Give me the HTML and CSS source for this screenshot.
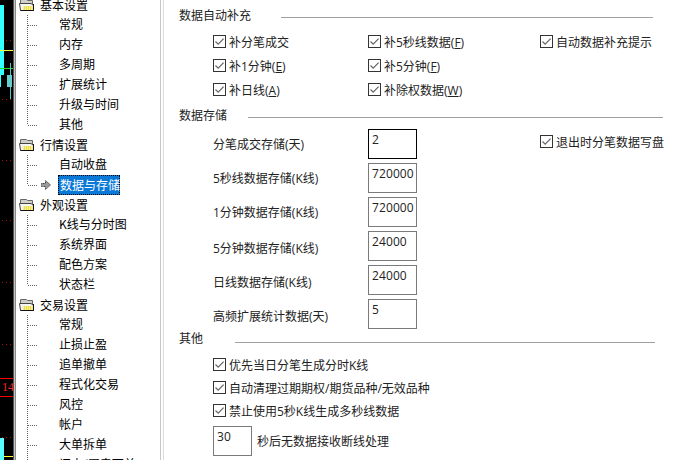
FILE: index.html
```html
<!DOCTYPE html>
<html lang="zh-CN">
<head>
<meta charset="utf-8">
<title>系统设置</title>
<link rel="stylesheet" href="styles.css">
</head>
<body>
<svg class="defs" width="0" height="0" aria-hidden="true">
  <symbol id="check" viewBox="0 0 13 13">
    <rect x="0.5" y="0.5" width="12" height="12" fill="#fff" stroke="#333"/>
    <path d="M2.5 6.5 5.2 9.2 10.6 3.6" fill="none" stroke="#666" stroke-width="1.2"/>
  </symbol>
  <symbol id="folder" viewBox="0 0 15 13">
    <path d="M1.5 1.5H7.5L8.5 2.5H13.5V11.5H1.5Z" fill="#cfcfc8" stroke="#666"/>
    <path d="M0.5 5.5H12L14.5 7.5V12.5H1.5Z" fill="#f4f4f0" stroke="#444"/>
    <path d="M4 8H13.5V12H4Z" fill="#f0dc3c"/>
    <path d="M4 9H13.5M4 11H13.5" stroke="#fff" stroke-dasharray="1 1"/>
    <path d="M1.5 12.5H14.5V6" fill="none" stroke="#111"/>
  </symbol>
</svg>
<div class="app">
  <div class="chart">
    <i class="c-bar"></i><i class="c-bar2"></i><i class="c-yellow"></i><i class="c-green"></i>
    <i class="c-wick"></i><i class="c-body"></i>
    <i class="c-dots d1"></i><i class="c-dots d2"></i><i class="c-dots d3"></i><i class="c-dots d4"></i><i class="c-dots d5"></i><i class="c-dots d6"></i><i class="c-dots d7"></i>
    <span class="c-tag">14</span>
    <i class="c-bottom"></i><i class="c-yellow2"></i>
  </div>
  <div class="chart-edge"></div>
  <nav class="tree">
    <div class="parent"><svg class="folder"><use href="#folder"/></svg>基本设置</div>
    <ul class="group">
      <li>常规</li><li>内存</li><li>多周期</li><li>扩展统计</li><li>升级与时间</li><li>其他</li>
    </ul>
    <div class="parent"><svg class="folder"><use href="#folder"/></svg>行情设置</div>
    <ul class="group">
      <li>自动收盘</li>
      <li class="current">
        <svg class="pointer" viewBox="0 0 10 10"><path d="M0.5 3.5H4.5V0.5L9.5 5 4.5 9.5V6.5H0.5Z" fill="#9a9a9a" stroke="#444" stroke-dasharray="1 0.5"/></svg>
        <span class="selected">数据与存储</span>
      </li>
    </ul>
    <div class="parent"><svg class="folder"><use href="#folder"/></svg>外观设置</div>
    <ul class="group">
      <li>K线与分时图</li><li>系统界面</li><li>配色方案</li><li>状态栏</li>
    </ul>
    <div class="parent"><svg class="folder"><use href="#folder"/></svg>交易设置</div>
    <ul class="group">
      <li>常规</li><li>止损止盈</li><li>追单撤单</li><li>程式化交易</li><li>风控</li><li>帐户</li><li>大单拆单</li><li>闪电/买卖下单</li>
    </ul>
  </nav>
  <div class="tree-edge"></div>
  <main class="pane">
    <section class="sec-fill">
      <h2 class="head"><span>数据自动补充</span><i class="rule rule-fill"></i></h2>
      <div class="checks">
        <label class="chk"><svg class="box"><use href="#check"/></svg>补分笔成交</label>
        <label class="chk"><svg class="box"><use href="#check"/></svg><span>补5秒线数据(<u>F</u>)</span></label>
        <label class="chk"><svg class="box"><use href="#check"/></svg>自动数据补充提示</label>
        <label class="chk"><svg class="box"><use href="#check"/></svg><span>补1分钟(<u>E</u>)</span></label>
        <label class="chk"><svg class="box"><use href="#check"/></svg><span>补5分钟(<u>F</u>)</span></label>
        <span></span>
        <label class="chk"><svg class="box"><use href="#check"/></svg><span>补日线(<u>A</u>)</span></label>
        <label class="chk"><svg class="box"><use href="#check"/></svg><span>补除权数据(<u>W</u>)</span></label>
      </div>
    </section>
    <section class="sec-store">
      <h2 class="head"><span>数据存储</span><i class="rule rule-store"></i></h2>
      <div class="form">
        <div class="lbl">分笔成交存储(天)</div><div class="field focus">2</div>
        <label class="chk exit"><svg class="box"><use href="#check"/></svg>退出时分笔数据写盘</label>
        <div class="lbl">5秒线数据存储(K线)</div><div class="field">720000</div><span></span>
        <div class="lbl">1分钟数据存储(K线)</div><div class="field">720000</div><span></span>
        <div class="lbl low">5分钟数据存储(K线)</div><div class="field">24000</div><span></span>
        <div class="lbl low">日线数据存储(K线)</div><div class="field">24000</div><span></span>
        <div class="lbl low">高频扩展统计数据(天)</div><div class="field">5</div><span></span>
      </div>
    </section>
    <section class="sec-other">
      <h2 class="head"><span>其他</span><i class="rule rule-other"></i></h2>
      <div class="stack">
        <label class="chk"><svg class="box"><use href="#check"/></svg>优先当日分笔生成分时K线</label>
        <label class="chk"><svg class="box"><use href="#check"/></svg>自动清理过期期权/期货品种/无效品种</label>
        <label class="chk"><svg class="box"><use href="#check"/></svg>禁止使用5秒K线生成多秒线数据</label>
      </div>
      <div class="timeout">
        <div class="field short">30</div><span>秒后无数据接收断线处理</span>
      </div>
    </section>
  </main>
</div>
</body>
</html>
```

FILE: styles.css
```css
* { box-sizing: border-box; }
html, body { margin: 0; padding: 0; background: #fff; }
.defs { position: absolute; }
.app {
  display: flex;
  width: 698px;
  height: 460px;
  overflow: hidden;
  font-family: "Open Sans", "Noto Sans CJK SC", sans-serif;
  font-size: 12px;
  color: #222;
}

/* chart sliver behind the dialog */
.chart { position: relative; flex: 0 0 13px; background: #000; overflow: hidden; }
.chart i { position: absolute; display: block; }
.c-bar { left: 0; top: 5px; width: 4px; height: 70px; background: #33ffff; }
.c-bar2 { left: 0; top: 75px; width: 1px; height: 12px; background: #33ffff; }
.c-yellow { left: 0; top: 50px; width: 13px; height: 1px; background: #ffff33; }
.c-green { left: 0; top: 68px; width: 13px; height: 1px; background: #22dd22; }
.c-wick { left: 10px; top: 63px; width: 1px; height: 36px; background: #44cccc; }
.c-body { left: 7px; top: 75px; width: 5px; height: 12px; background: #66cccc; }
.c-dots { left: 2px; width: 10px; height: 1px; background: repeating-linear-gradient(90deg, #a01010 0 1px, #000 1px 4px); }
.d1 { top: 40px; left: 6px; width: 6px; }
.d2 { top: 99px; }
.d3 { top: 160px; }
.d4 { top: 220px; }
.d5 { top: 282px; }
.d6 { top: 344px; }
.d7 { top: 437px; }
.c-tag {
  position: absolute;
  left: 0;
  top: 378px;
  width: 14px;
  height: 19px;
  border: 1px solid #ff0000;
  border-left: 0;
  color: #ff2020;
  font: 12px/17px "Liberation Serif", serif;
  padding-left: 2px;
  white-space: nowrap;
  overflow: hidden;
}
.c-bottom { left: 0; top: 438px; width: 4px; height: 22px; background: #55ffff; }
.c-yellow2 { left: 4px; top: 456px; width: 9px; height: 1px; background: #ffff33; }
.chart-edge {
  flex: 0 0 3px;
  background: linear-gradient(90deg, #555 0 1px, #c4c4c4 1px 2px, #8a8a8a 2px 3px);
}

/* tree */
.tree { flex: 0 0 144px; margin-top: -5px; color: #000; font-family: "Noto Sans CJK SC", sans-serif; }
.parent { display: flex; align-items: center; height: 20px; line-height: 17px; padding: 0 0 2px 3px; }
.folder { width: 15px; height: 13px; margin-right: 6px; flex: none; }
.group { list-style: none; margin: 0; padding: 0; }
.group li { position: relative; height: 20px; line-height: 18px; padding-left: 43px; white-space: nowrap; }
.group li::before {
  content: "";
  position: absolute;
  left: 11px;
  top: 0;
  height: 100%;
  width: 1px;
  background: repeating-linear-gradient(180deg, #666 0 1px, transparent 1px 2px);
}
.group li:last-child::before { height: 10px; }
.group li::after {
  content: "";
  position: absolute;
  left: 12px;
  top: 10px;
  width: 10px;
  height: 1px;
  background: repeating-linear-gradient(90deg, #666 0 1px, transparent 1px 2px);
}
.current { padding-left: 42px !important; }
.pointer { position: absolute; left: 25px; top: 5px; width: 10px; height: 10px; }
.selected {
  display: inline-block;
  height: 20px;
  line-height: 17px;
  width: 62px;
  text-indent: 1px;
  color: #fff;
  background: #0a78d7;
  border: 1px dotted #000;
}

.tree-edge {
  flex: 0 0 4px;
  border-left: 1px solid #c8c8c8;
  border-right: 1px solid #dcdcdc;
}

/* settings pane */
.pane { flex: 1; padding-left: 15px; min-width: 0; }
.head {
  display: flex;
  align-items: center;
  height: 16px;
  margin: 0;
  font-size: 12px;
  font-weight: 400;
  color: #222;
}
.rule { display: block; height: 1px; background: #a0a0a0; margin-top: 4px; }
.rule-fill { margin-left: 30px; width: 372px; }
.rule-store { margin-left: 21px; width: 415px; }
.rule-other { margin-left: 32px; width: 420px; margin-top: 8px; }

.sec-fill { padding-top: 7px; }
.sec-store { padding-top: 11px; }
.sec-other { padding-top: 1px; }

.chk { display: flex; align-items: center; gap: 3px; height: 13px; white-space: nowrap; }
.box { width: 13px; height: 13px; flex: none; }
u { text-underline-offset: 1px; }

.checks {
  display: grid;
  grid-template-columns: 155px 172px 1fr;
  grid-auto-rows: 13px;
  row-gap: 11px;
  padding: 12px 0 0 34px;
}

.form {
  display: grid;
  grid-template-columns: 155px 49px 1fr;
  grid-auto-rows: 30px;
  row-gap: 4px;
  padding: 6px 0 0 34px;
}
.lbl { padding-top: 7px; line-height: 17px; white-space: nowrap; }
.low { padding-top: 9px; }
.field {
  height: 30px;
  border: 1px solid #7a7a7a;
  padding: 2px 0 0 3px;
  line-height: 16px;
  font-size: 12px;
  letter-spacing: 0.1px;
  white-space: nowrap;
  overflow: hidden;
}
.focus { border-color: #000; }
.exit { margin: 6px 0 0 123px; }

.stack { display: flex; flex-direction: column; gap: 10px; padding: 12px 0 0 34px; }
.timeout { display: flex; align-items: center; gap: 5px; padding: 9px 0 0 34px; }
.short { width: 39px; flex: none; }
```
